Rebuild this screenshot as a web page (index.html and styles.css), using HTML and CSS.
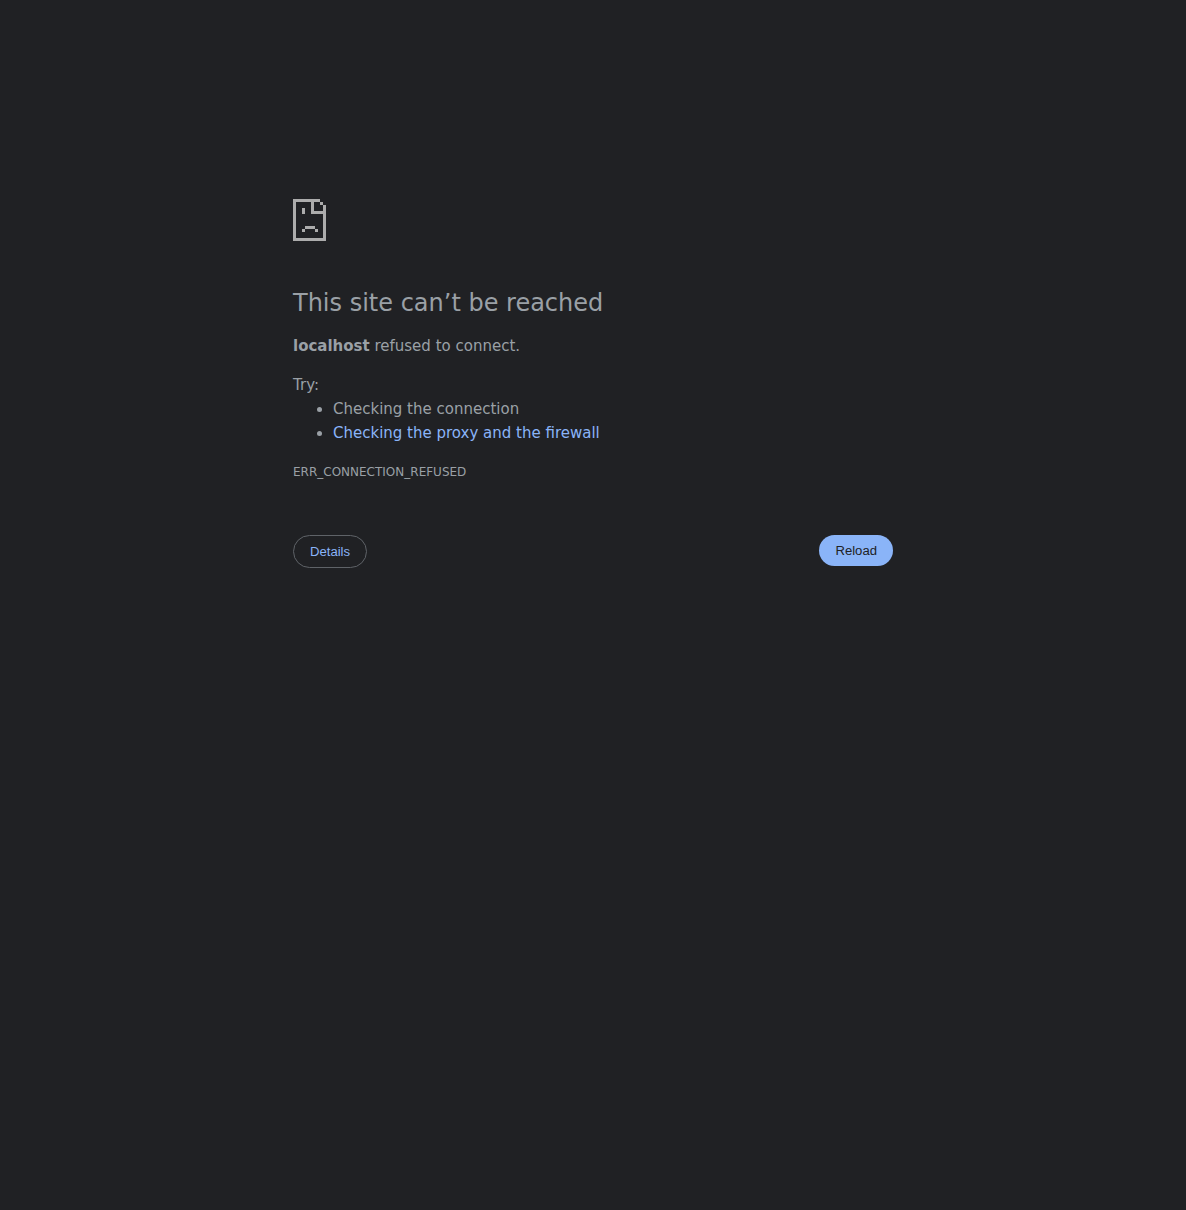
FILE: index.html
```html
<!DOCTYPE html>
<html lang="en">
<head>
<meta charset="utf-8">
<title>localhost</title>
<link rel="stylesheet" href="styles.css">
</head>
<body>
<main class="wrapper">
  <svg class="icon" viewBox="0 0 33 42" width="33" height="42" shape-rendering="crispEdges" aria-hidden="true">
    <path d="M0 0H27V3H3V39H30V15H18V3H21V12H30V6H33V42H0ZM27 3H30V6H27ZM9 9H12V15H9ZM12 27H22V30H12ZM9 30H12V33H9ZM22 30H25V33H22Z"/>
  </svg>
  <h1 class="title">This site can’t be reached</h1>
  <p class="summary"><strong>localhost</strong> refused to connect.</p>
  <div class="suggestions">
    <p class="try">Try:</p>
    <ul class="list">
      <li>Checking the connection</li>
      <li><a class="link" href="#buttons">Checking the proxy and the firewall</a></li>
    </ul>
  </div>
  <div class="error-code">ERR_CONNECTION_REFUSED</div>
  <div class="buttons" id="buttons">
    <button class="button details" type="button">Details</button>
    <button class="button reload" type="button">Reload</button>
  </div>
</main>
</body>
</html>
```
FILE: styles.css
```css
body {
  margin: 0;
  background: #202124;
  color: #9aa0a6;
  font-family: "DejaVu Sans", sans-serif;
  font-size: 15px;
  line-height: 24px;
}

.wrapper {
  box-sizing: border-box;
  width: 600px;
  margin: 0 auto;
  padding-top: 199px;
}

.icon {
  display: block;
  fill: #acacac;
}

.title {
  margin: 47px 0 16px;
  font-size: 24px;
  font-weight: 500;
  line-height: 30px;
}

.summary {
  margin: 0 0 15px;
}

.try {
  margin: 0;
}

.list {
  margin: 0;
  padding-left: 40px;
}

.link {
  color: #8ab4f8;
  text-decoration: none;
}

.error-code {
  margin-top: 15px;
  font-size: 12px;
}

.buttons {
  display: flex;
  justify-content: space-between;
  align-items: flex-start;
  margin-top: 51px;
}

.button {
  box-sizing: border-box;
  padding: 8px 16px;
  border: 0;
  border-radius: 20px;
  font-family: "Liberation Sans", Arial, sans-serif;
  font-size: 13.125px;
  line-height: 15px;
}

.details {
  border: 1px solid #5f6368;
  background: #202124;
  color: #8ab4f8;
}

.reload {
  background: #8ab4f8;
  color: #202124;
}
```
